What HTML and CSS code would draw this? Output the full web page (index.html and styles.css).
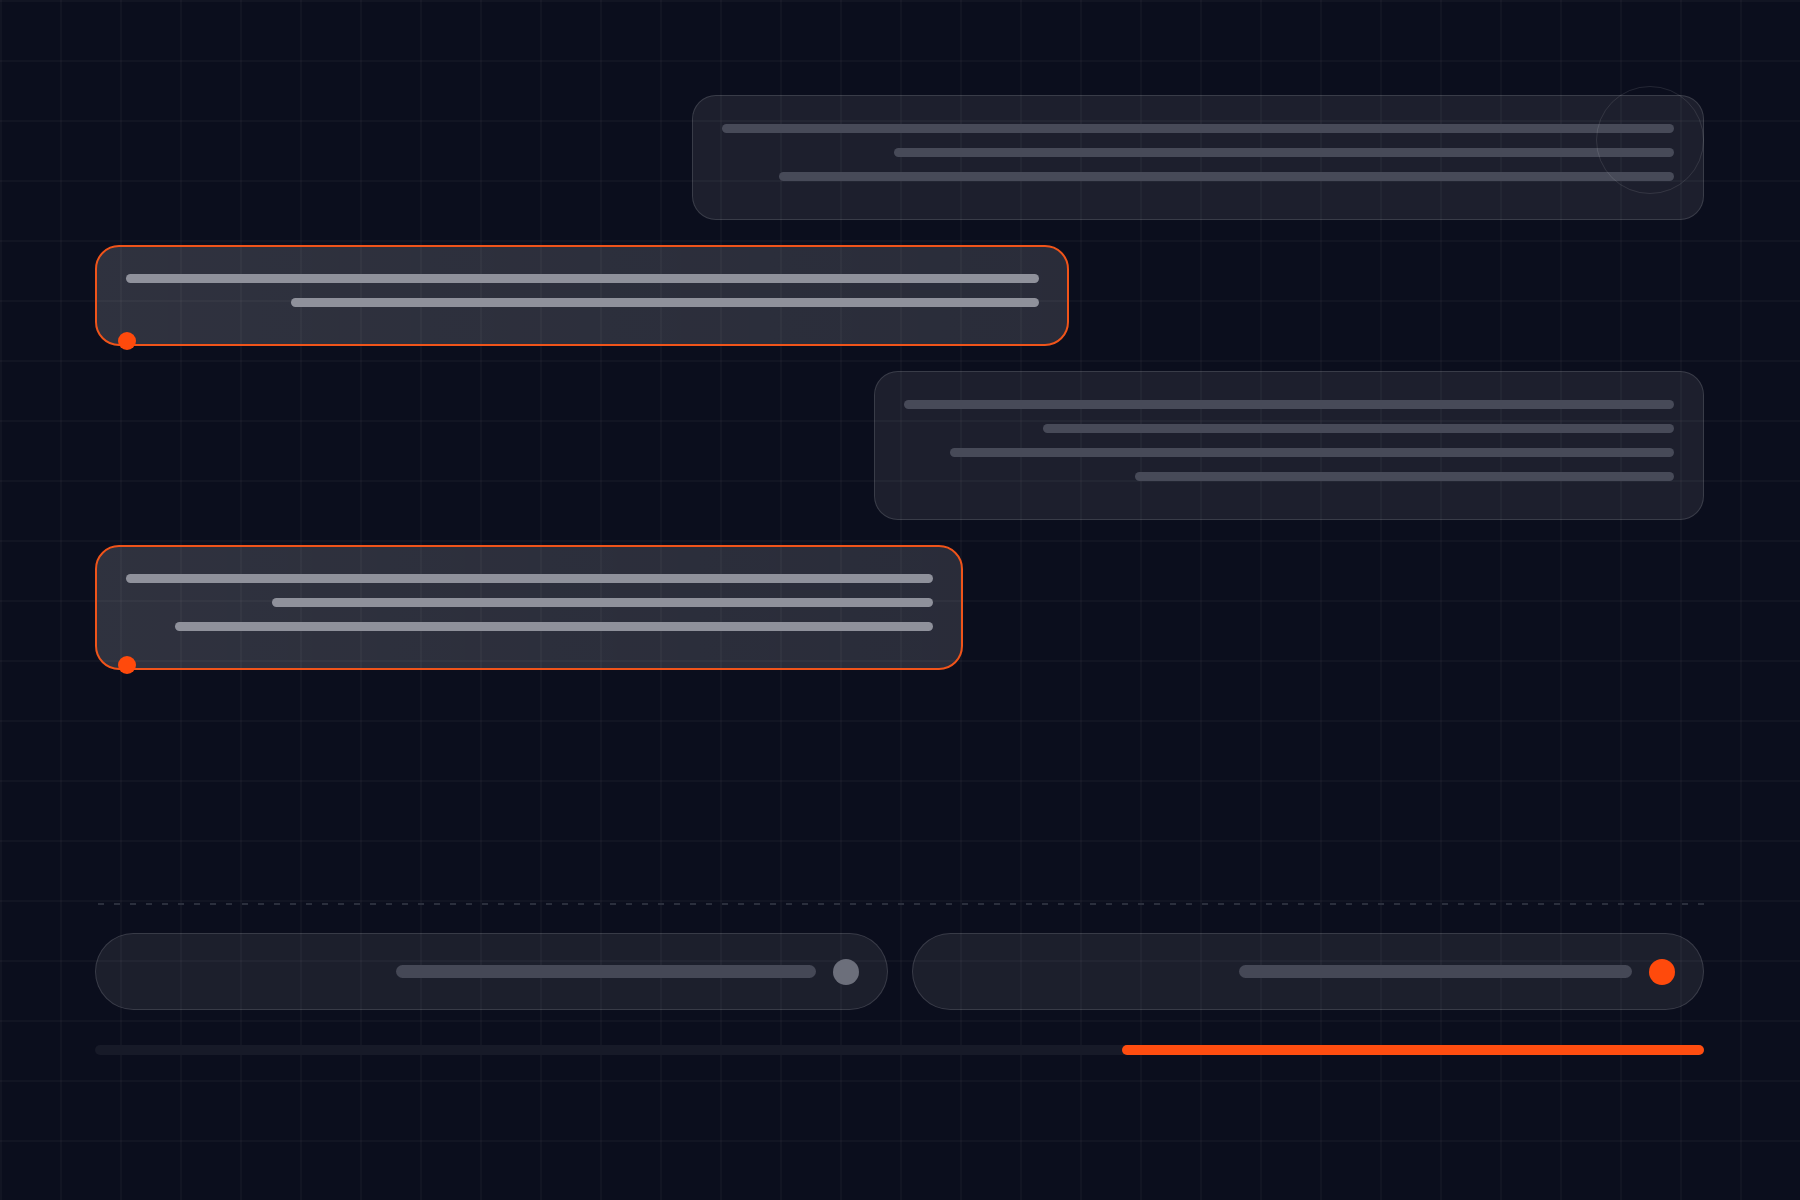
FILE: index.html
```html
<!DOCTYPE html>
<html lang="en">
<head>
  <meta charset="UTF-8">
  <meta name="viewport" content="width=device-width, initial-scale=1.0">
  <title>Thread</title>
  <link rel="stylesheet" href="styles.css">
</head>
<body>
  <div class="stage">
    <div class="thread">
      <div class="msg msg-in card-1">
        <span class="ring"></span>
        <span class="bar" style="width: 952px"></span>
        <span class="bar" style="width: 780px"></span>
        <span class="bar" style="width: 895px"></span>
      </div>

      <div class="msg msg-out card-2">
        <span class="bar" style="width: 913px"></span>
        <span class="bar" style="width: 748px"></span>
        <span class="pin"></span>
      </div>

      <div class="msg msg-in card-3">
        <span class="bar" style="width: 770px"></span>
        <span class="bar" style="width: 631px"></span>
        <span class="bar" style="width: 724px"></span>
        <span class="bar" style="width: 539px"></span>
      </div>

      <div class="msg msg-out card-4">
        <span class="bar" style="width: 807px"></span>
        <span class="bar" style="width: 661px"></span>
        <span class="bar" style="width: 758px"></span>
        <span class="pin"></span>
      </div>
    </div>

    <div class="divider"></div>

    <div class="options">
      <div class="option">
        <span class="option-bar" style="width: 420px"></span>
        <span class="option-dot"></span>
      </div>
      <div class="option option-active">
        <span class="option-bar" style="width: 393px"></span>
        <span class="option-dot"></span>
      </div>
    </div>

    <div class="progress">
      <div class="progress-fill" style="width: 36.2%"></div>
    </div>
  </div>
</body>
</html>
```

FILE: styles.css
```css
*{
  margin: 0;
  padding: 0;
  box-sizing: border-box;
}

body{
  width: 1800px;
  height: 1200px;
  overflow: hidden;
  font-family: "Liberation Sans", Arial, sans-serif;
  background-color: #0b0e1d;
  background-image:
    linear-gradient(to right, rgba(255, 255, 255, 0.026) 2px, transparent 2px),
    linear-gradient(to bottom, rgba(255, 255, 255, 0.026) 2px, transparent 2px);
  background-size: 60px 60px;
}

.stage{
  padding: 95px 96px 0 95px;
}

/* message cards */
.thread{
  display: flex;
  flex-direction: column;
  gap: 25px;
}

.msg{
  position: relative;
  display: flex;
  flex-direction: column;
  align-items: flex-end;
  gap: 15px;
  border-radius: 24px;
}

.msg-in{
  align-self: flex-end;
  padding: 28px 29px 38px 29px;
  background-color: rgba(255, 255, 255, 0.074);
  border: 1px solid rgba(255, 255, 255, 0.13);
}

.msg-out{
  align-self: flex-start;
  padding: 27px 28px 37px 29px;
  background: linear-gradient(90deg, rgba(255, 255, 255, 0.15), rgba(255, 255, 255, 0.125));
  border: 2px solid #f0541a;
}

.card-1{ width: 1012px; }
.card-2{ width: 974px; }
.card-3{ width: 830px; }
.card-4{ width: 868px; }

.bar{
  display: block;
  height: 9px;
  border-radius: 5px;
  background-color: #474a58;
}

.msg-out .bar{
  background-color: #8f919b;
}

.pin{
  position: absolute;
  left: 21px;
  bottom: -6px;
  width: 18px;
  height: 18px;
  border-radius: 50%;
  background-color: #ff4a0c;
}

.ring{
  position: absolute;
  top: -10px;
  right: -1px;
  width: 108px;
  height: 108px;
  border-radius: 50%;
  border: 1px solid rgba(255, 255, 255, 0.1);
}

/* bottom area */
.divider{
  margin-top: 233px;
  height: 2px;
  background-image: repeating-linear-gradient(to right, #2b2f3d 0, #2b2f3d 6px, transparent 6px, transparent 16px);
  background-position: 3px 0;
}

.options{
  margin-top: 28px;
  display: flex;
  gap: 24px;
}

.option{
  flex: 1;
  height: 77px;
  display: flex;
  align-items: center;
  justify-content: flex-end;
  gap: 17px;
  padding-right: 28px;
  border-radius: 39px;
  background-color: rgba(255, 255, 255, 0.072);
  border: 1px solid rgba(255, 255, 255, 0.13);
}

.option-bar{
  display: block;
  height: 13px;
  border-radius: 7px;
  background-color: #454856;
}

.option-dot{
  width: 26px;
  height: 26px;
  border-radius: 50%;
  background-color: #6c6f7b;
}

.option-active .option-dot{
  background-color: #ff4a0c;
}

.progress{
  margin-top: 35px;
  height: 10px;
  border-radius: 5px;
  background-color: #171a28;
  display: flex;
  justify-content: flex-end;
}

.progress-fill{
  height: 10px;
  border-radius: 5px;
  background-color: #ff4d10;
}
```
